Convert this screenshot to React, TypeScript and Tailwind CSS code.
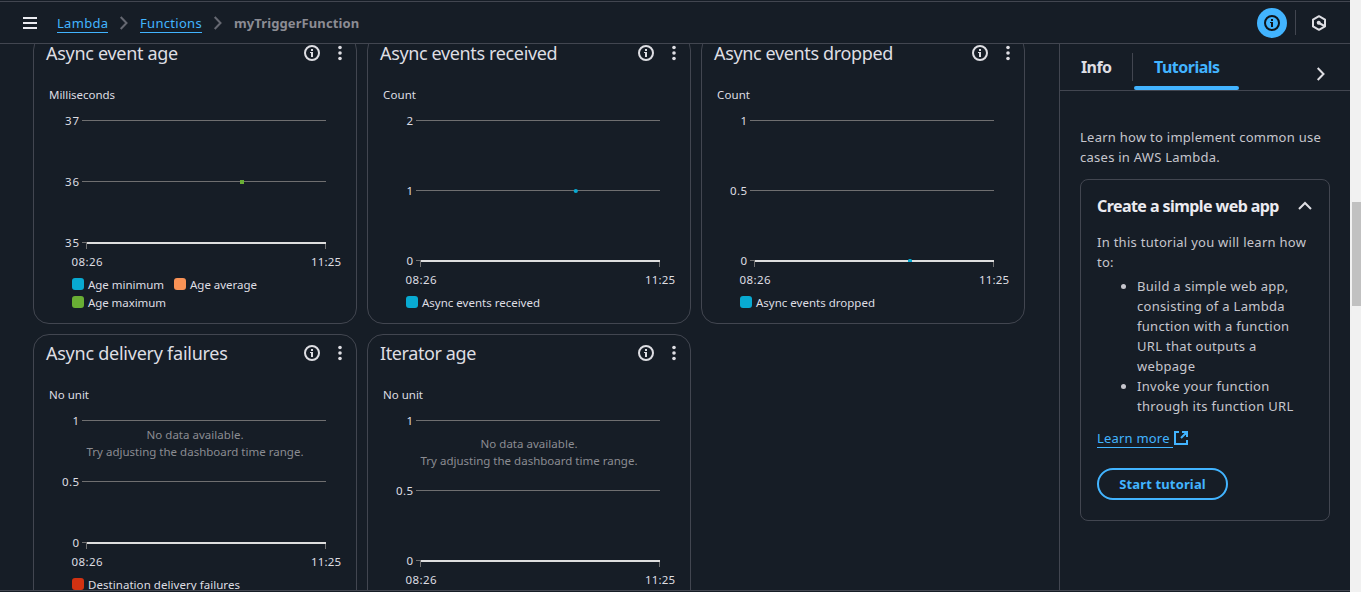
import React from "react";

type Series = { label: string; color: string; width: number };
type Metric = {
  title: string;
  titleClass: string;
  unit: string;
  unitWidth: number;
  ticks: string[];
  tall: boolean;
  series: Series[];
  point?: { color: string; level: number; square?: boolean };
};

const BLUE = "#08aad2";

const METRICS: Metric[] = [
  {
    title: "Async event age",
    titleClass: "tracking-[-0.3px]",
    unit: "Milliseconds",
    unitWidth: 66,
    ticks: ["37", "36", "35"],
    tall: false,
    series: [
      { label: "Age minimum", color: BLUE, width: 76 },
      { label: "Age average", color: "#f89256", width: 67 },
      { label: "Age maximum", color: "#69ae34", width: 78 },
    ],
    point: { color: "#69ae34", level: 1, square: true },
  },
  {
    title: "Async events received",
    titleClass: "tracking-[-0.36px]",
    unit: "Count",
    unitWidth: 33,
    ticks: ["2", "1", "0"],
    tall: true,
    series: [{ label: "Async events received", color: BLUE, width: 118 }],
    point: { color: BLUE, level: 1 },
  },
  {
    title: "Async events dropped",
    titleClass: "tracking-[-0.36px]",
    unit: "Count",
    unitWidth: 33,
    ticks: ["1", "0.5", "0"],
    tall: true,
    series: [{ label: "Async events dropped", color: BLUE, width: 119 }],
    point: { color: BLUE, level: 2 },
  },
  {
    title: "Async delivery failures",
    titleClass: "tracking-[-0.25px]",
    unit: "No unit",
    unitWidth: 40,
    ticks: ["1", "0.5", "0"],
    tall: false,
    series: [{ label: "Destination delivery failures", color: "#d13212", width: 152 }],
  },
  {
    title: "Iterator age",
    titleClass: "tracking-[-0.4px]",
    unit: "No unit",
    unitWidth: 40,
    ticks: ["1", "0.5", "0"],
    tall: true,
    series: [],
  },
];

function InfoIcon({ className = "" }: { className?: string }) {
  return (
    <svg className={className} width="16" height="16" viewBox="0 0 16 16" fill="none">
      <circle cx="8" cy="8" r="7" stroke="currentColor" strokeWidth="2" />
      <path d="M7 4h2v2H7zM6 7h3v5H7V8H6z" fill="currentColor" />
    </svg>
  );
}

function Chevron({ className = "" }: { className?: string }) {
  return (
    <svg className={className} width="10" height="14" viewBox="0 0 10 14" fill="none">
      <path d="M1.7 1l5.8 6-5.8 6" stroke="currentColor" strokeWidth="2" />
    </svg>
  );
}

function Chart({ metric }: { metric: Metric }) {
  const step = metric.tall ? 70 : 61;
  const base = 86 + step * 2;
  const height = base + 30 - 41;
  const messageTop = metric.tall ? 114 : 105;
  return (
    <svg
      className="block shrink-0"
      width="322"
      height={height}
      viewBox={`1 41 322 ${height}`}
      fontSize="11.5"
      fill="#dedee3"
    >
      <text x="16" y="65" textLength={metric.unitWidth}>{metric.unit}</text>
      {metric.ticks.map((t, i) => (
        <text
          key={i}
          x={46}
          y={91 + step * i}
          textAnchor="end"
          textLength={t.length === 3 ? 17 : t.length === 2 ? 14 : undefined}
        >
          {t}
        </text>
      ))}
      <path
        d={`M49 86.5H293M49 ${86.5 + step}H293M49 ${base + 0.5}H54M53.5 ${base}V${base + 7}M292.5 ${base}V${base + 7}`}
        stroke="#6f6f70"
        fill="none"
      />
      <rect x="54" y={base} width="239" height="2" fill="#dedede" />
      {metric.point &&
        (metric.point.square ? (
          <rect x="207" y={base - step - 1} width="4" height="4" fill={metric.point.color} />
        ) : metric.point.level === 2 ? (
          <path d={`M207 ${base + 2}v-2l1-1h2l1 1v2z`} fill={metric.point.color} />
        ) : (
          <circle cx="208.8" cy={base - step + 1} r="2.1" fill={metric.point.color} />
        ))}
      <text x="38.5" y={base + 24} textLength="31">08:26</text>
      <text x="278" y={base + 24} textLength="30">11:25</text>
      {!metric.point && (
        <g fill="#8b8c92">
          <text x="113.5" y={messageTop} textLength="97">No data available.</text>
          <text x="53.5" y={messageTop + 17} textLength="217">
            Try adjusting the dashboard time range.
          </text>
        </g>
      )}
    </svg>
  );
}

function Legend({ series }: { series: Series[] }) {
  return (
    <ul className="flex flex-wrap gap-x-[10px] gap-y-[6px] pl-[38px] pr-6 pt-[6px]">
      {series.map((s) => (
        <li key={s.label} className="flex h-3 items-center gap-1">
          <svg width="12" height="12"><rect width="12" height="12" rx="3" fill={s.color} /></svg>
          <svg className="overflow-visible" width={s.width} height="12" fontSize="11.5" fill="#dedee3">
            <text x="0" y="11" textLength={s.width}>{s.label}</text>
          </svg>
        </li>
      ))}
    </ul>
  );
}

function MetricCard({ metric }: { metric: Metric }) {
  return (
    <article className="flex h-[290px] w-[324px] flex-col rounded-2xl border border-[#424650]">
      <header className="flex h-10 shrink-0 items-center pb-1 pl-3 pr-[14px]">
        <h2 className={`flex-1 text-[18px] leading-4 text-[#dedee3] ${metric.titleClass}`}>{metric.title}</h2>
        <InfoIcon className="mr-[18px] text-[#dedee3]" />
        <svg width="4" height="16" viewBox="0 0 4 16" fill="#dedee3">
          <circle cx="2" cy="2.5" r="1.8" />
          <circle cx="2" cy="8" r="1.8" />
          <circle cx="2" cy="13.5" r="1.8" />
        </svg>
      </header>
      <Chart metric={metric} />
      <Legend series={metric.series} />
    </article>
  );
}

function TopBar() {
  return (
    <header className="flex h-[43px] shrink-0 items-center border-y border-[#424650] pl-[23px] pr-[23px]">
      <svg width="14" height="12" fill="#ebebf0"><path d="M0 0h14v2H0zM0 5h14v2H0zM0 10h14v2H0z" /></svg>
      <nav className="ml-5 flex flex-1 items-center text-[13px] leading-[18px]">
        <a className="w-[51px] whitespace-nowrap border-b border-[#42b4ff] pt-px tracking-[0.3px] text-[#42b4ff]">Lambda</a>
        <Chevron className="ml-[11px] text-[#656871]" />
        <a className="ml-[11px] w-[62px] whitespace-nowrap border-b border-[#42b4ff] pt-px tracking-[0.3px] text-[#42b4ff]">Functions</a>
        <Chevron className="ml-[11px] text-[#656871]" />
        <span className="ml-[11px] whitespace-nowrap font-bold tracking-[0.1px] text-[#8c8c94]">myTriggerFunction</span>
      </nav>
      <button className="flex size-[30px] items-center justify-center rounded-full bg-[#42b4ff] text-[#0f141a]">
        <InfoIcon />
      </button>
      <div className="mx-2 h-[25px] w-px bg-[#424650]" />
      <svg className="ml-[7px]" width="16" height="16" viewBox="0 0 16 16" fill="none" stroke="#dedee3" strokeWidth="2">
        <path d="M8 1.2l6 3.4v6.8l-6 3.4-6-3.4V4.6z" strokeLinejoin="round" />
        <path d="M8 8l5.5 3" />
        <circle cx="7.7" cy="7.8" r="2" fill="#dedee3" stroke="none" />
      </svg>
    </header>
  );
}

function HelpPanel() {
  return (
    <aside className="flex w-[291px] shrink-0 flex-col border-l border-[#424650]">
      <div className="flex h-[47px] shrink-0 border-b border-[#424650] pl-[21px] text-[16px] font-bold leading-6">
        <span className="w-[51px] pt-[11px] tracking-[-0.6px] text-[#dedee3]">Info</span>
        <div className="mt-[9px] h-7 w-px bg-[#424650]" />
        <div className="ml-px flex h-[46px] w-[105px] flex-col">
          <span className="flex-1 pl-5 pt-[11px] tracking-[-0.5px] text-[#42b4ff]">Tutorials</span>
          <div className="h-1 rounded-full bg-[#42b4ff]" />
        </div>
        <Chevron className="ml-[77px] mt-[23px] text-[#dedee3]" />
      </div>
      <div className="px-5 pt-9 text-[13px] leading-5 text-[#c6c6cd]">
        <p className="whitespace-nowrap tracking-[0.26px]">
          Learn how to implement common use
          <br />
          cases in AWS Lambda.
        </p>
        <section className="mt-3 h-[342px] w-[250px] rounded-lg border border-[#424650] px-4 pt-[14px]">
          <div className="flex h-6 items-center justify-between">
            <h3 className="whitespace-nowrap text-[16px] font-bold tracking-[-0.57px] text-[#ebebf0]">Create a simple web app</h3>
            <svg className="mr-[1px]" width="14" height="10" viewBox="0 0 14 10" fill="none">
              <path d="M1 8l6-6 6 6" stroke="#dedee3" strokeWidth="2" />
            </svg>
          </div>
          <p className="mt-[14px] whitespace-nowrap tracking-[0.27px]">
            In this tutorial you will learn how
            <br />
            to:
          </p>
          <ul className="mt-1 list-disc whitespace-nowrap pl-10 tracking-[0.3px]">
            <li>
              Build a simple web app,
              <br />
              consisting of a Lambda
              <br />
              function with a function
              <br />
              URL that outputs a
              <br />
              webpage
            </li>
            <li>
              Invoke your function
              <br />
              through its function URL
            </li>
          </ul>
          <a className="mt-3 flex h-5 gap-px text-[#42b4ff]">
            <span className="w-[76px] whitespace-nowrap border-b border-[#42b4ff] tracking-[0.2px]">Learn more</span>
            <svg className="mt-[3px]" width="14" height="14" viewBox="0 0 14 14" fill="none" stroke="currentColor" strokeWidth="2">
              <path d="M5 1H1v12h12V9M8 1h5v5M13 1L7 7" />
            </svg>
          </a>
          <button className="mt-5 block h-8 w-[131px] whitespace-nowrap rounded-full border-2 border-[#42b4ff] text-[13px] font-bold tracking-[0.15px] text-[#42b4ff]">
            Start tutorial
          </button>
        </section>
      </div>
    </aside>
  );
}

export default function App() {
  return (
    <div className="flex h-[592px] w-[1361px] overflow-hidden bg-[#161d26] font-['Noto_Sans',sans-serif]">
      <div className="flex min-w-0 flex-1 flex-col pt-px">
        <TopBar />
        <div className="flex h-[546px] shrink-0 overflow-hidden">
          <main className="flex-1 overflow-hidden pl-[33px]">
            <div className="-mt-[10px] grid grid-cols-[324px_324px_324px] gap-[10px]">
              {METRICS.map((m) => (
                <MetricCard key={m.title} metric={m} />
              ))}
            </div>
          </main>
          <HelpPanel />
        </div>
        <div className="h-px shrink-0 bg-[#424650]" />
      </div>
      <div className="w-[11px] bg-[#f1f1f1] pl-[2px] pt-[202px]">
        <div className="h-[104px] bg-[#c1c1c1]" />
      </div>
    </div>
  );
}
